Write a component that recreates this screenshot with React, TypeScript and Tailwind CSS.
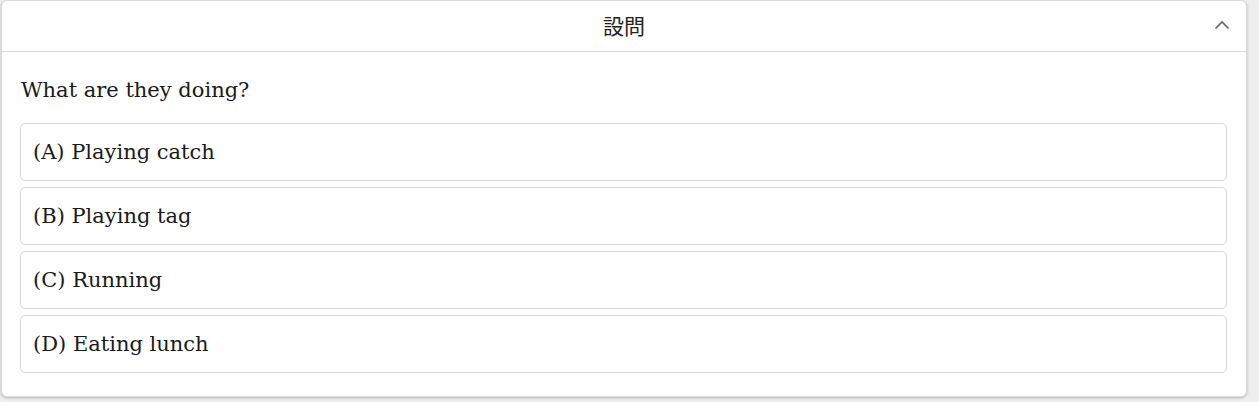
import React from "react";

const serif = { fontFamily: '"DejaVu Serif", "Liberation Serif", serif' };

export default function App() {
  const options = ["(A) Playing catch", "(B) Playing tag", "(C) Running", "(D) Eating lunch"];
  return (
    <div className="w-[1259px] h-[402px] bg-[#eeeeee] overflow-hidden">
      <div className="w-[1246px] ml-px h-[397px] bg-white border border-[#dcdcdc] rounded-[6px] shadow-[0_1px_3px_rgba(0,0,0,0.25)] flex flex-col">
        <div className="relative h-[51px] border-b border-[#dcdcdc] flex items-center justify-center shrink-0">
          <span
            className="text-[21px] text-[#222]"
            style={{ fontFamily: '"Noto Sans CJK JP", "Noto Sans CJK SC", sans-serif' }}
          >
            設問
          </span>
          <svg
            className="absolute right-[16px] top-[18px]"
            width="16"
            height="12"
            viewBox="0 0 16 12"
            fill="none"
            stroke="#666"
            strokeWidth="1.7"
          >
            <path d="M1.5 9.5 L8 3 L14.5 9.5" />
          </svg>
        </div>
        <div className="pl-[18px] pr-[19px] pt-[21px]">
          <div className="text-[21px] leading-[34px] text-[#1a1a1a] mb-[16px] pl-px" style={serif}>
            What are they doing?
          </div>
          <div className="flex flex-col gap-[6px]">
            {options.map((o) => (
              <div
                key={o}
                className="h-[58px] border border-[#dcdcdc] rounded-[5px] flex items-center pt-px px-[12px] text-[21px] text-[#1a1a1a]"
                style={serif}
              >
                {o}
              </div>
            ))}
          </div>
        </div>
      </div>
    </div>
  );
}
